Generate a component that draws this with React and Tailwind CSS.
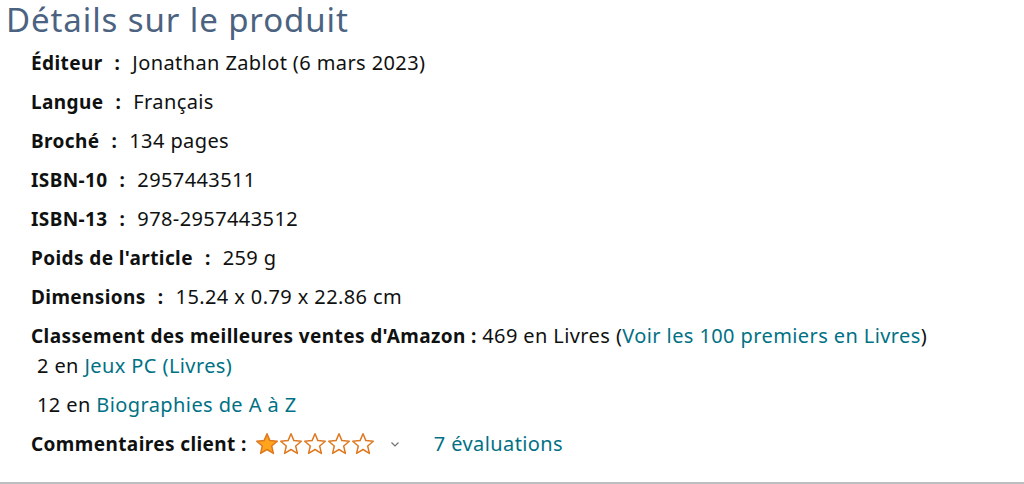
import React from "react";

const Star = ({ filled }) => (
  <svg width="24" height="24" viewBox="0 0 24 24" className="block">
    <path
      d="M12 1.8 L14.9 8.6 L22.3 9.2 L16.7 14 L18.4 21.4 L12 17.5 L5.6 21.4 L7.3 14 L1.7 9.2 L9.1 8.6 Z"
      fill={filled ? "#ffa41c" : "#ffffff"}
      stroke="#de7921"
      strokeWidth="1.5"
      strokeLinejoin="round"
    />
  </svg>
);

const Label = ({ children }) => (
  <span className="font-bold text-[19px] tracking-[0.4px]">{children}</span>
);

const Colon = () => (
  <span className="font-bold text-[19px] ml-[12px] mr-[12px]">:</span>
);

const Row = ({ label, value }) => (
  <li className="mt-[13px] leading-[26px]">
    <Label>{label}</Label>
    <Colon />
    <span>{value}</span>
  </li>
);

export default function App() {
  return (
    <div
      className="w-[1024px] h-[484px] bg-white text-[#0f1111] flex flex-col overflow-hidden"
      style={{ fontFamily: '"Noto Sans", Arial, sans-serif' }}
    >
      <h2 className="pl-[6px] text-[33px] tracking-[0.9px] leading-[40px] text-[#4b6381] font-normal whitespace-nowrap">
        Détails sur le produit
      </h2>
      <ul className="pl-[31px] text-[20px] tracking-[0.4px] flex-1">
        <li className="mt-[10px] leading-[26px]">
          <Label>Éditeur</Label>
          <Colon />
          <span>Jonathan Zablot (6 mars 2023)</span>
        </li>
        <Row label="Langue" value="Français" />
        <Row label="Broché" value="134 pages" />
        <Row label="ISBN-10" value="2957443511" />
        <Row label="ISBN-13" value="978-2957443512" />
        <Row label="Poids de l'article" value="259 g" />
        <Row label="Dimensions" value="15.24 x 0.79 x 22.86 cm" />
        <li className="mt-[13px] leading-[26px]">
          <Label>Classement des meilleures ventes d'Amazon : </Label>
          <span>469 en Livres (</span>
          <span className="text-[#007185]">Voir les 100 premiers en Livres</span>
          <span>)</span>
          <ul className="pl-[6px]">
            <li className="mt-[4px] leading-[26px]">
              2 en <span className="text-[#007185]">Jeux PC (Livres)</span>
            </li>
            <li className="mt-[13px] leading-[26px]">
              12 en <span className="text-[#007185]">Biographies de A à Z</span>
            </li>
          </ul>
        </li>
        <li className="mt-[13px] leading-[26px] flex items-center">
          <Label>Commentaires client :</Label>
          <span className="flex items-center ml-[8px]">
            <Star filled />
            <Star />
            <Star />
            <Star />
            <Star />
          </span>
          <svg width="12" height="12" viewBox="0 0 12 12" className="ml-[14px]">
            <path d="M2.5 4.5 L6 8 L9.5 4.5" fill="none" stroke="#6f7373" strokeWidth="1.2" />
          </svg>
          <span className="ml-[33px] text-[#007185]">7 évaluations</span>
        </li>
      </ul>
      <div className="h-[2px] bg-[#bbbfbf]" />
    </div>
  );
}
